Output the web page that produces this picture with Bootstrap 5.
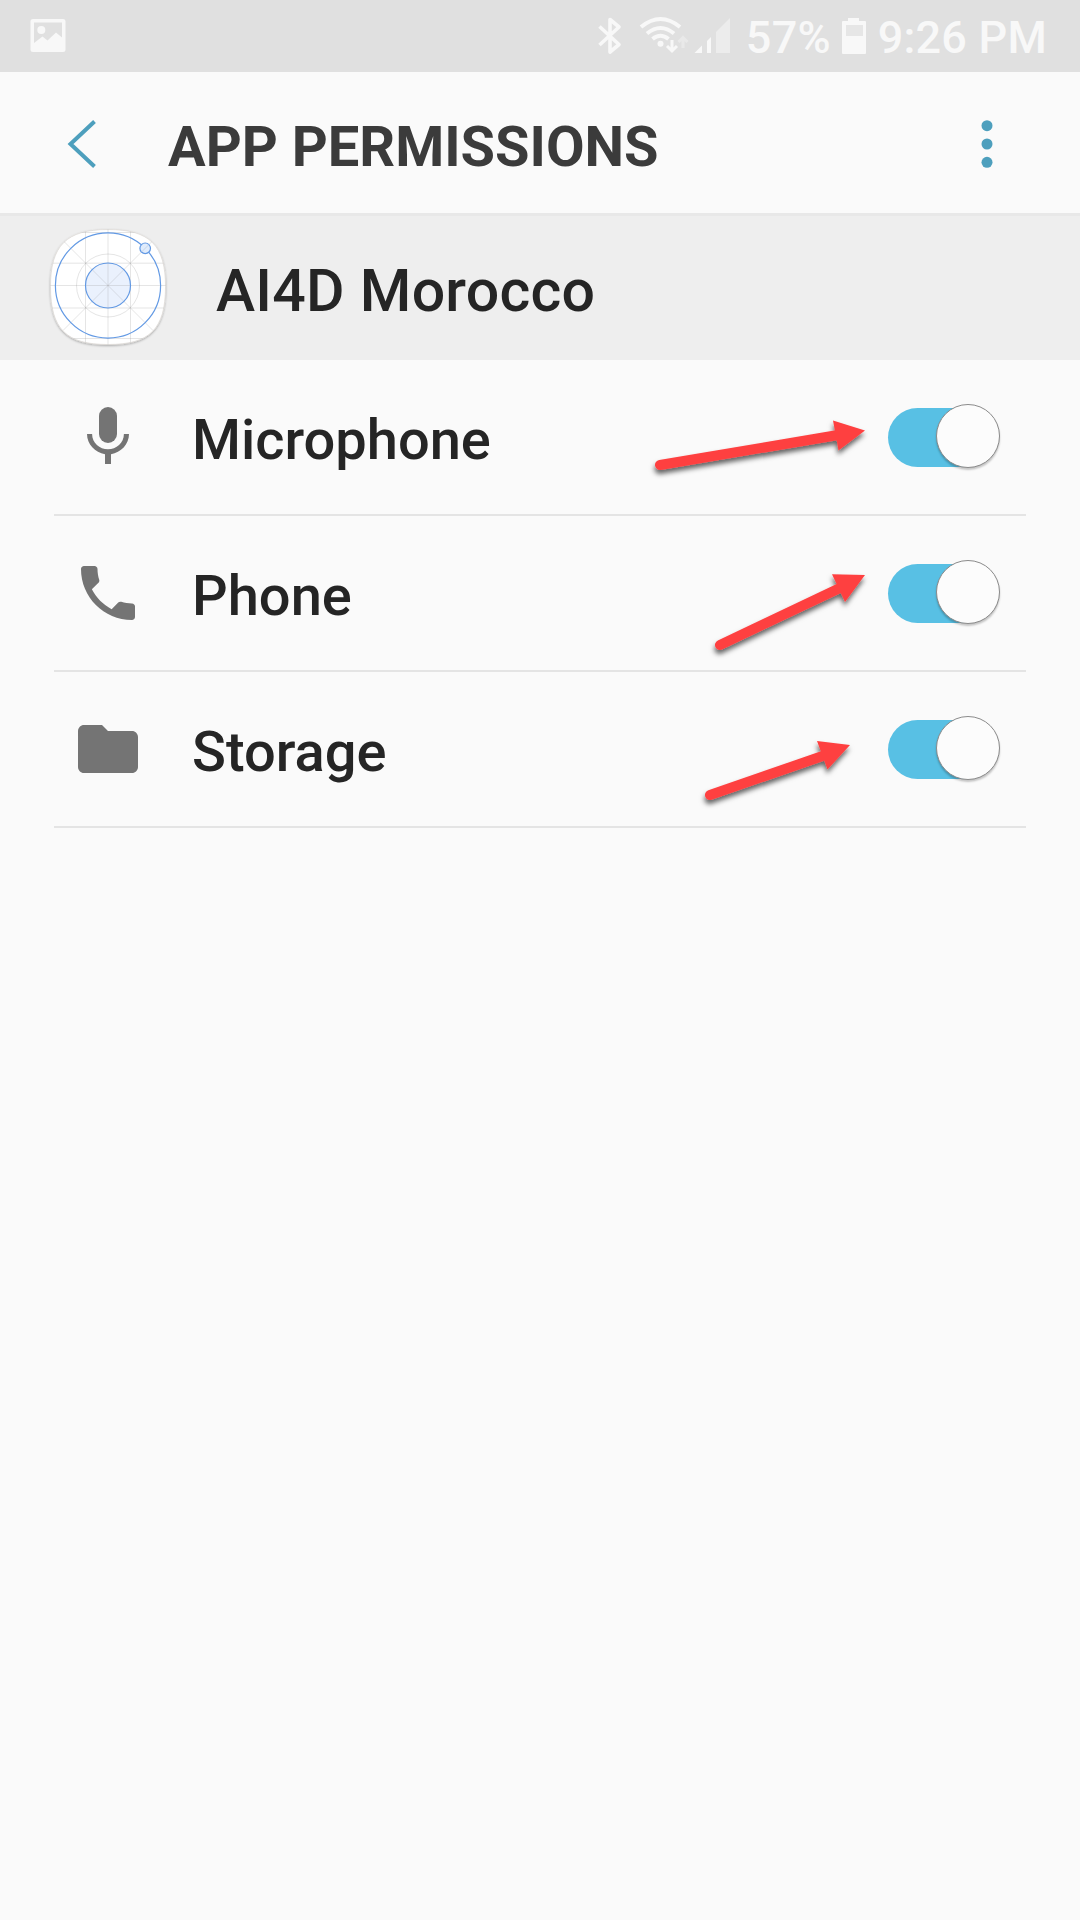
<!DOCTYPE html>
<html lang="en">
<head>
<meta charset="utf-8">
<meta name="viewport" content="width=device-width, initial-scale=1">
<title>App permissions</title>
<link rel="stylesheet" href="https://cdn.jsdelivr.net/npm/bootstrap@5.3.0/dist/css/bootstrap.min.css">
<style>
  body { background: #fafafa; font-family: Roboto, "Liberation Sans", sans-serif; color: #252525; min-height: 1920px; font-weight: 500; }
  svg { display: block; flex: none; }
  .status-strip { height: 72px; background: #e0e0e0; color: #f8f8f8; font-size: 45px; line-height: 72px; padding-left: 24px; padding-right: 33px; }
  .status-strip span { padding-top: 3px; white-space: pre; letter-spacing: .2px; }
  .battery-level { margin-left: 13px; }
  .clock { margin-left: 9px; }
  .title-bar { height: 141px; padding: 3px 69px 0 60px; }
  .title-bar h1 { font-size: 56px; font-weight: 700; color: #3b3b3b; margin: 0 0 0 60px; padding-top: 6px; line-height: 66px; }
  .plain-btn { background: none; border: 0; padding: 0; }
  .app-header { height: 147px; background: #eee; border-top: 3px solid #e8e8e8; padding-left: 36px; }
  .app-header h2 { font-size: 59px; font-weight: 500; margin: 0 0 0 36px; padding-top: 6px; line-height: 70px; letter-spacing: .25px; }
  .perm-list { padding: 0 54px; }
  .perm-row { height: 156px; border-bottom: 2px solid #e4e4e4; padding: 0 26px 0 18px; }
  .perm-name { font-size: 56px; line-height: 66px; margin-left: 48px; padding-top: 6px; }
  .toggle { width: 112px; height: 64px; padding-top: 4px; margin-top: -2px; }
  .toggle-track { width: 100px; height: 59px; border-radius: 30px; background: #58c0e4; overflow: visible; }
  .toggle-knob { width: 64px; height: 64px; margin: -4px 0 0 48px; flex: none; border-radius: 50%; background: #fcfcfc; border: 1px solid #8b8b8b; box-shadow: 0 2px 2px rgba(0,0,0,.22); }
  .pointer-layer { left: 0; top: 0; pointer-events: none; }
</style>
<script src="https://cdn.jsdelivr.net/npm/bootstrap@5.3.0/dist/js/bootstrap.bundle.min.js"></script>
</head>
<body>
<div class="status-strip d-flex align-items-center">
  <svg width="48" height="72" viewBox="24 0 48 72" aria-hidden="true">
    <path fill="#f8f8f8" fill-rule="evenodd" d="M33 19h30q2.500 0 2.500 2.500v28.500q0 2-2.500 2H33q-2.500 0-2.500-2V21.500Q30.500 19 33 19zM34 22.500V43l8.500-6.500 5 4 8.500-8 6 5V22.500z"/>
    <circle cx="41.300" cy="30" r="4" fill="#f8f8f8"/>
  </svg>
  <svg class="ms-auto" width="140" height="72" viewBox="594 0 140 72" aria-hidden="true">
    <path d="M600.500 26.500L620 44.500 611 52V19.500L620 27 600.500 45" fill="none" stroke="#f8f8f8" stroke-width="3.600" stroke-linejoin="round"/>
    <g fill="none" stroke="#f8f8f8" stroke-width="4">
      <path d="M642 27q19.500-16 39 0M648 33.500q13.500-11 27 0M653.500 39q8-6.500 16 0"/>
    </g>
    <circle cx="661.500" cy="43.800" r="3" fill="#f8f8f8"/>
    <path d="M673 40v11M668 46l5 5 5-5" fill="none" stroke="#f8f8f8" stroke-width="3"/>
    <path d="M684 48V38M679.500 42l4.500-4.500 4.500 4.500" fill="none" stroke="#e9e9e9" stroke-width="3"/>
    <path d="M695.500 53l7.500-7.500V53zM708 41l4-4v16h-4z" fill="#f8f8f8"/>
    <path d="M717 32l14-14v35h-14z" fill="#ececec"/>
  </svg>
  <span class="battery-level">57%</span>
  <svg class="ms-2" width="30" height="72" viewBox="839 0 30 72" aria-hidden="true">
    <path fill="#f8f8f8" d="M848 18h11v3h6q1 0 1 1v31q0 1-1 1h-22q-1 0-1-1V22q0-1 1-1h5z"/>
    <path fill="#e6e6e6" d="M846 25h17v11h-17z"/>
  </svg>
  <span class="clock">9:26 PM</span>
</div>

<header class="title-bar d-flex align-items-center">
  <button class="plain-btn" type="button" aria-label="Back">
    <svg width="48" height="60" viewBox="60 114 48 60"><path d="M94.500 121.500L70.500 144l24 22.500" fill="none" stroke="#4d9fbd" stroke-width="4"/></svg>
  </button>
  <h1>APP PERMISSIONS</h1>
  <button class="plain-btn ms-auto" type="button" aria-label="More options">
    <svg width="48" height="60" viewBox="963 114 48 60" fill="#4d9fbd"><circle cx="987" cy="125.700" r="5.500"/><circle cx="987" cy="144" r="5.500"/><circle cx="987" cy="162.300" r="5.500"/></svg>
  </button>
</header>

<section class="app-header d-flex align-items-center">
  <svg width="144" height="144" viewBox="36 216 144 144" aria-hidden="true">
    <defs>
      <path id="tile" d="M108 229.500c42 0 57.500 16 57.500 57 0 43-16 58-57.500 58s-57.500-15-57.500-58c0-41 16-57 57.500-57z"/>
      <clipPath id="tileClip"><use href="#tile"/></clipPath>
      <filter id="tileShadow" x="-10%" y="-10%" width="120%" height="120%"><feDropShadow dx="0" dy="1" stdDeviation=".8" flood-opacity=".3"/></filter>
    </defs>
    <use href="#tile" fill="#fff" stroke="#ddd8d4" stroke-width=".7" filter="url(#tileShadow)"/>
    <circle cx="108" cy="285.500" r="22.500" fill="#eaf1fd"/>
    <g clip-path="url(#tileClip)" fill="none" stroke="#969696" stroke-opacity=".25">
      <path d="M85.500 225v125M108 225v125M130.500 225v125M48 263.200h120M48 285.500h120M48 308h120M48 232.500h120M48 338.500h120M63 240.500l90 90M153 240.500l-90 90"/>
      <circle cx="108" cy="285.500" r="31.500"/>
    </g>
    <g fill="none" stroke="#6299e4" stroke-width="1.200">
      <circle cx="108" cy="285.500" r="52.600"/>
      <circle cx="108" cy="285.500" r="22.500"/>
      <circle cx="145.200" cy="248.300" r="5.300" fill="#e0ecfc"/>
    </g>
    <path d="M141.500 252l7.500-7.500" stroke="#bccde4" stroke-width=".8"/>
  </svg>
  <h2>AI4D Morocco</h2>
</section>

<main class="perm-list">
  <div class="perm-row d-flex align-items-center">
    <svg width="72" height="72" viewBox="0 0 24 24" fill="#747474" aria-hidden="true"><rect x="9" y="2" width="6" height="12" rx="3"/><path d="M17.300 11c0 3-2.540 5.100-5.300 5.100S6.700 14 6.700 11H5c0 3.410 2.720 6.230 6 6.720V21h2v-3.280c3.280-.48 6-3.300 6-6.720h-1.700z"/></svg>
    <div class="perm-name">Microphone</div>
    <div class="toggle ms-auto" role="switch" aria-checked="true" aria-label="Microphone"><div class="toggle-track d-flex"><div class="toggle-knob"></div></div></div>
  </div>
  <div class="perm-row d-flex align-items-center">
    <svg width="72" height="72" viewBox="0 0 24 24" fill="#747474" aria-hidden="true"><path d="M6.620 10.790c1.440 2.830 3.760 5.140 6.590 6.590l2.200-2.200c.27-.27.67-.36 1.020-.24 1.120.37 2.330.57 3.570.57.55 0 1 .45 1 1V20c0 .55-.45 1-1 1-9.390 0-17-7.610-17-17 0-.55.45-1 1-1h3.500c.55 0 1 .45 1 1 0 1.250.2 2.450.57 3.570.11.35.03.74-.25 1.020l-2.200 2.200z"/></svg>
    <div class="perm-name">Phone</div>
    <div class="toggle ms-auto" role="switch" aria-checked="true" aria-label="Phone"><div class="toggle-track d-flex"><div class="toggle-knob"></div></div></div>
  </div>
  <div class="perm-row d-flex align-items-center">
    <svg width="72" height="72" viewBox="0 0 24 24" fill="#747474" aria-hidden="true"><path d="M10 4H4c-1.100 0-1.990.9-1.990 2L2 18c0 1.100.9 2 2 2h16c1.100 0 2-.9 2-2V8c0-1.100-.9-2-2-2h-8l-2-2z"/></svg>
    <div class="perm-name">Storage</div>
    <div class="toggle ms-auto" role="switch" aria-checked="true" aria-label="Storage"><div class="toggle-track d-flex"><div class="toggle-knob"></div></div></div>
  </div>
</main>

<!-- red arrows drawn over the rows, one for each switch -->
<svg class="pointer-layer position-absolute" width="1080" height="860" viewBox="0 0 1080 860" aria-hidden="true">
  <defs><filter id="arrowShadow" filterUnits="userSpaceOnUse" x="630" y="400" width="260" height="430"><feDropShadow dx="-.5" dy="4" stdDeviation="2.500" flood-opacity=".6"/></filter></defs>
  <g filter="url(#arrowShadow)" fill="#fe4141" stroke="#fe4141">
    <path d="M660 465L838 435M720 645L842 587M710 795L824 755.500" stroke-width="10" stroke-linecap="round"/>
    <path stroke="none" d="M833 420.500L865 430.500 838.500 450.500zM832 574.300L865 575 845 602zM817 741L850 745 827.500 769.500z"/>
  </g>
</svg>
</body>
</html>
